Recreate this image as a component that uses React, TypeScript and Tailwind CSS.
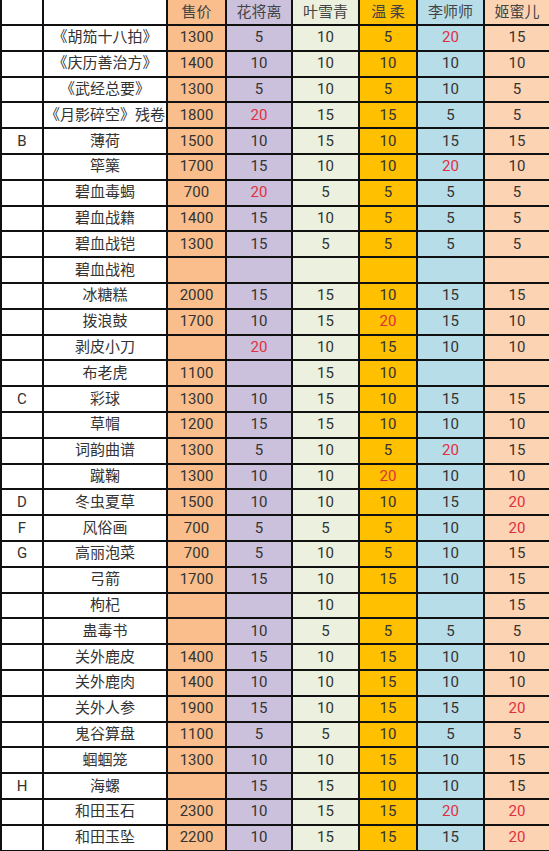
type Cell = string | [string, "r"];

const cols = [
  "bg-[#f9be8c]",
  "bg-[#ccc1dc]",
  "bg-[#ebf1de]",
  "bg-[#ffc000]",
  "bg-[#b7dde8]",
  "bg-[#fcd4b4]",
];

const heads = ["售价", "花将离", "叶雪青", "温 柔", "李师师", "姬蜜儿"];

const R = (v: string): Cell => [v, "r"];

const rows: [string, string, Cell[]][] = [
  ["", "《胡笳十八拍》", ["1300", "5", "10", "5", R("20"), "15"]],
  ["", "《庆历善治方》", ["1400", "10", "10", "10", "10", "10"]],
  ["", "《武经总要》", ["1300", "5", "10", "5", "10", "5"]],
  ["", "《月影碎空》残卷", ["1800", R("20"), "15", "15", "5", "5"]],
  ["B", "薄荷", ["1500", "10", "15", "10", "15", "15"]],
  ["", "筚篥", ["1700", "15", "10", "10", R("20"), "10"]],
  ["", "碧血毒蝎", ["700", R("20"), "5", "5", "5", "5"]],
  ["", "碧血战籍", ["1400", "15", "10", "5", "5", "5"]],
  ["", "碧血战铠", ["1300", "15", "5", "5", "5", "5"]],
  ["", "碧血战袍", ["", "", "", "", "", ""]],
  ["", "冰糖糕", ["2000", "15", "15", "10", "15", "15"]],
  ["", "拨浪鼓", ["1700", "10", "15", R("20"), "15", "10"]],
  ["", "剥皮小刀", ["", R("20"), "10", "15", "10", "10"]],
  ["", "布老虎", ["1100", "", "15", "10", "", ""]],
  ["C", "彩球", ["1300", "10", "15", "10", "15", "15"]],
  ["", "草帽", ["1200", "15", "15", "10", "10", "10"]],
  ["", "词韵曲谱", ["1300", "5", "10", "5", R("20"), "15"]],
  ["", "蹴鞠", ["1300", "10", "10", R("20"), "10", "10"]],
  ["D", "冬虫夏草", ["1500", "10", "10", "10", "15", R("20")]],
  ["F", "风俗画", ["700", "5", "5", "5", "10", R("20")]],
  ["G", "高丽泡菜", ["700", "5", "10", "5", "10", "15"]],
  ["", "弓箭", ["1700", "15", "10", "15", "10", "15"]],
  ["", "枸杞", ["", "", "10", "", "", "15"]],
  ["", "蛊毒书", ["", "10", "5", "5", "5", "5"]],
  ["", "关外鹿皮", ["1400", "15", "10", "15", "10", "10"]],
  ["", "关外鹿肉", ["1400", "10", "10", "15", "10", "10"]],
  ["", "关外人参", ["1900", "15", "10", "15", "15", R("20")]],
  ["", "鬼谷算盘", ["1100", "5", "5", "10", "5", "5"]],
  ["", "蝈蝈笼", ["1300", "10", "10", "15", "10", "15"]],
  ["H", "海螺", ["", "15", "15", "10", "10", "15"]],
  ["", "和田玉石", ["2300", "10", "15", "15", R("20"), R("20")]],
  ["", "和田玉坠", ["2200", "10", "15", "15", "15", R("20")]],
];

const cell = "flex items-center justify-center leading-none";

export default function App() {
  return (
    <div
      className="w-[549px] h-[851px] overflow-hidden bg-white text-[15px] text-[#333]"
      style={{ fontFamily: 'Roboto, "Noto Sans CJK SC", sans-serif' }}
    >
      <div className="grid grid-cols-[40px_122px_57px_64px_65px_56px_65px_64px] grid-rows-[24px] auto-rows-[23.8px] gap-[2px] bg-[#111] pl-[2px] pb-[2px]">
        <div className={`${cell} bg-white`} />
        <div className={`${cell} bg-white`} />
        {heads.map((h, i) => (
          <div key={h} className={`${cell} ${cols[i]} text-[#444]`}>
            {h}
          </div>
        ))}
        {rows.map(([letter, name, vals], ri) => (
          <div key={ri} className="contents">
            <div className={`${cell} bg-white`}>{letter}</div>
            <div className={`${cell} bg-white whitespace-nowrap`}>{name}</div>
            {vals.map((v, ci) => {
              const red = Array.isArray(v);
              return (
                <div
                  key={ci}
                  className={`${cell} ${cols[ci]} ${red ? "text-[#e0303f]" : ""}`}
                >
                  {red ? v[0] : v}
                </div>
              );
            })}
          </div>
        ))}
      </div>
    </div>
  );
}
